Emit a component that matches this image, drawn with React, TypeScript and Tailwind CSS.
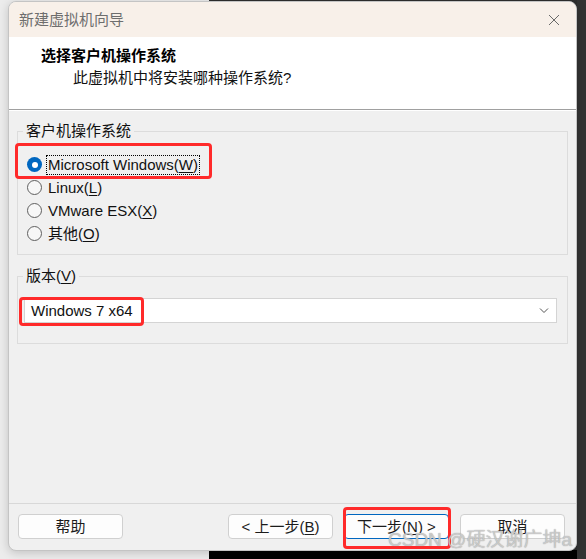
import React from "react";

const font = "font-['Liberation_Sans','Noto_Sans_CJK_SC',sans-serif]";

function Radio({ checked, label, mnemonic, focused }: { checked?: boolean; label: string; mnemonic: string; focused?: boolean }) {
  return (
    <div className="flex h-[23px] items-center">
      {checked ? (
        <span className="flex h-[15px] w-[15px] items-center justify-center rounded-full bg-[#0067c0]">
          <span className="h-[6px] w-[6px] rounded-full bg-white" />
        </span>
      ) : (
        <span className="h-[15px] w-[15px] rounded-full border border-[#5f5f5f] bg-[#f7f7f7]" />
      )}
      <span
        className={
          "ml-[4px] flex h-[20px] items-center px-[1px] leading-none " +
          (focused ? "border border-dotted border-black" : "border border-transparent")
        }
      >
        {label}(<span className="underline underline-offset-[2px]">{mnemonic}</span>)
      </span>
    </div>
  );
}

function Button({ children, primary, className }: { children: React.ReactNode; primary?: boolean; className?: string }) {
  return (
    <button
      className={
        "flex h-[25px] w-[105px] items-center justify-center rounded-[4px] border bg-[#fdfdfd] text-[15px] leading-none text-[#1b1b1b] " +
        (primary ? "border-[#0067c0]" : "border-[#d0d0d0]") +
        " " +
        (className ?? "")
      }
    >
      {children}
    </button>
  );
}

export default function App() {
  return (
    <div className={`relative h-[559px] w-[586px] overflow-hidden bg-[#ececec] ${font}`}>
      {/* desktop behind the dialog */}
      <div className="absolute bottom-0 left-[209px] right-0 top-0 bg-[#2e2e2e]" />
      <div className="absolute bottom-0 left-[209px] right-0 top-[550px] bg-black" />
      <div className="absolute bottom-0 right-0 top-0 w-[9px] bg-[#333333]" />

      {/* dialog window */}
      <div className="absolute left-[8px] top-[1px] flex h-[550px] w-[569px] flex-col overflow-hidden rounded-[8px] border border-[#c4c4c4] bg-[#f0f0f0] shadow-[0_2px_10px_rgba(0,0,0,0.18)]">
        <div className="flex h-[35px] shrink-0 items-center justify-between bg-[#f8f0e9] pl-[10px] pr-[16px]">
          <span className="text-[15px] leading-none text-[#6e6e6e]">新建虚拟机向导</span>
          <svg width="12" height="12" viewBox="0 0 12 12">
            <path d="M1 1L11 11M11 1L1 11" stroke="#6a6a6a" strokeWidth="1" fill="none" />
          </svg>
        </div>

        <div className="h-[73px] shrink-0 border-b border-[#a0a0a0] bg-white pl-[32px] pt-[9px]">
          <div className="text-[15px] font-bold leading-[20px] text-black">选择客户机操作系统</div>
          <div className="ml-[32px] mt-[2px] text-[15px] leading-[20px] text-[#111]">此虚拟机中将安装哪种操作系统?</div>
        </div>

        <div className="flex flex-1 flex-col border-t border-white px-[8px] text-[15px] text-[#111]">
          <fieldset className="mt-[10px] border border-[#dcdcdc] pb-[9px] pl-[9px] pt-[12px]">
            <legend className="-ml-[4px] px-[3px] leading-[20px]">客户机操作系统</legend>
            <Radio checked focused label="Microsoft Windows" mnemonic="W" />
            <Radio label="Linux" mnemonic="L" />
            <Radio label="VMware ESX" mnemonic="X" />
            <Radio label="其他" mnemonic="O" />
          </fieldset>

          <fieldset className="mt-[11px] border border-[#dcdcdc] pb-[20px] pl-[6px] pr-[10px] pt-[12px]">
            <legend className="-ml-[1px] px-[3px] leading-[20px]">
              版本(<span className="underline underline-offset-[2px]">V</span>)
            </legend>
            <div className="flex h-[25px] items-center justify-between border border-[#d4d4d4] bg-white pl-[6px] pr-[7px]">
              <span className="leading-none">Windows 7 x64</span>
              <svg width="10" height="6" viewBox="0 0 10 6">
                <path d="M1 0.5L5 4.5L9 0.5" stroke="#555" strokeWidth="1" fill="none" />
              </svg>
            </div>
          </fieldset>

          <div className="flex-1" />
        </div>

        <div className="flex h-[47px] shrink-0 items-start border-t border-[#d8d8d8] pl-[9px] pr-[11px] pt-[10px]">
          <Button>帮助</Button>
          <div className="flex-1" />
          <Button>&lt; 上一步(<span className="underline underline-offset-[2px]">B</span>)</Button>
          <Button primary className="ml-[11px]">下一步(<span className="underline underline-offset-[2px]">N</span>) &gt;</Button>
          <Button className="ml-[11px]">取消</Button>
        </div>
      </div>

      {/* red annotation boxes */}
      <div className="pointer-events-none absolute left-[15px] top-[143px] h-[36px] w-[197px] rounded-[4px] border-[3px] border-[#ff2a2a]" />
      <div className="pointer-events-none absolute left-[19px] top-[297px] h-[29px] w-[125px] rounded-[4px] border-[3px] border-[#ff2a2a]" />
      <div className="pointer-events-none absolute left-[343px] top-[507px] h-[42px] w-[108px] rounded-[4px] border-[3px] border-[#ff2a2a]" />

      {/* watermark */}
      <div className="pointer-events-none absolute left-[388px] top-[530px] text-[19px] leading-none text-[#e0e0e0]/70 [text-shadow:0_0_1px_#888]">
        CSDN @硬汉谢广坤a
      </div>
    </div>
  );
}
